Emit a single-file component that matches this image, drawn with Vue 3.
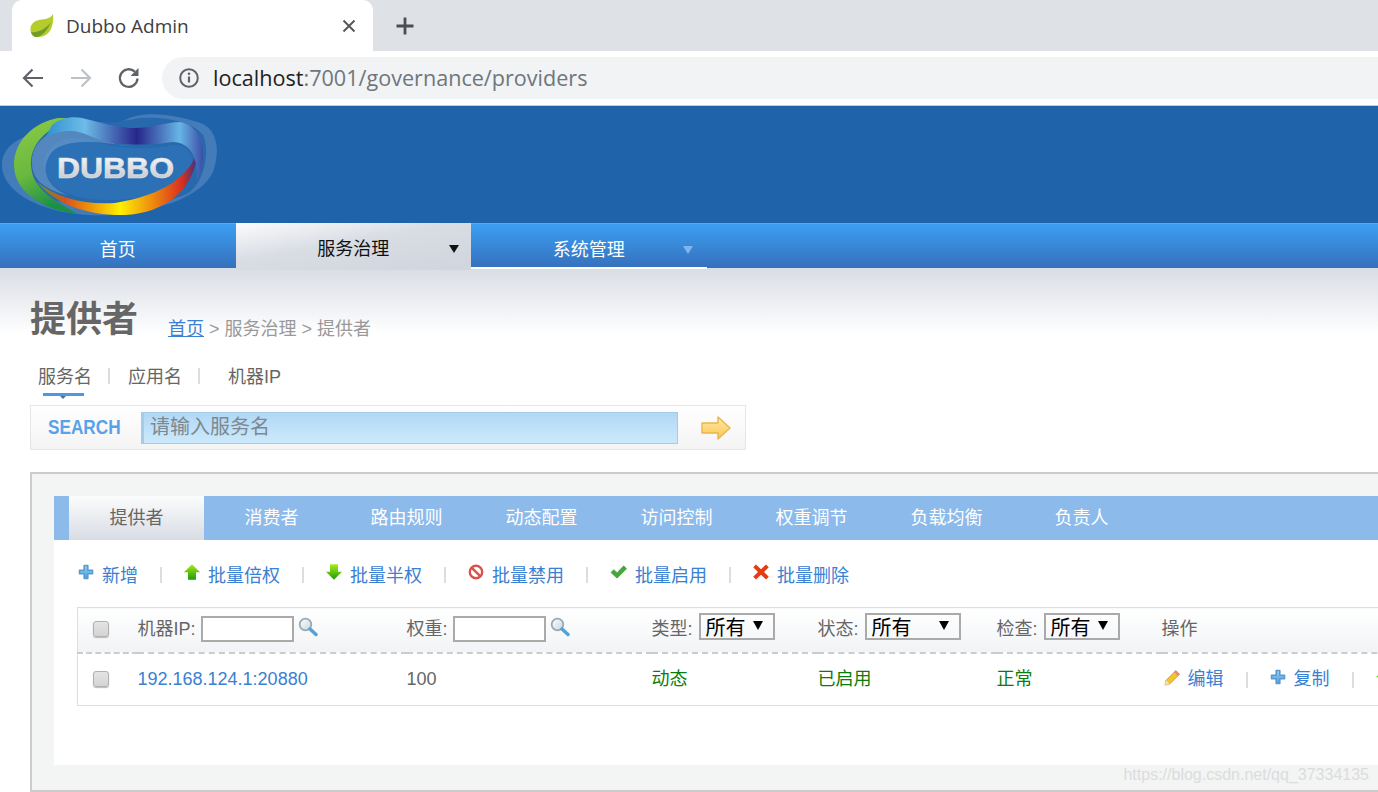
<template>
  <div class="screen">
    <!-- shared icons -->
    <svg class="icon-defs" width="0" height="0">
      <defs>
        <linearGradient id="grad-plus" x1="0" y1="0" x2="0" y2="1">
          <stop offset="0" stop-color="#8fd0f4" />
          <stop offset="1" stop-color="#4f9edc" />
        </linearGradient>
        <linearGradient id="grad-green" x1="0" y1="0" x2="0" y2="1">
          <stop offset="0" stop-color="#a8ec20" />
          <stop offset="1" stop-color="#1f9a06" />
        </linearGradient>
        <linearGradient id="grad-lens" x1="0" y1="0" x2="1" y2="1">
          <stop offset="0" stop-color="#ffffff" />
          <stop offset="1" stop-color="#c5d6e0" />
        </linearGradient>
      </defs>
      <symbol id="i-plus" viewBox="0 0 16 16">
        <path d="M6.200 1.500h3.600v4.700h4.700v3.600H9.800v4.700H6.200V9.800H1.500V6.200h4.700z" fill="url(#grad-plus)" stroke="#5a9ad0" stroke-width="1.600" stroke-linejoin="round" />
      </symbol>
      <symbol id="i-up" viewBox="0 0 16 16">
        <path d="M8 .3L16 8.300h-4v7.400H4V8.300H0z" fill="url(#grad-green)" />
      </symbol>
      <symbol id="i-down" viewBox="0 0 16 16">
        <path d="M4 .3h8v7.400h4L8 15.700 0 7.700h4z" fill="url(#grad-green)" />
      </symbol>
      <symbol id="i-ban" viewBox="0 0 16 16">
        <circle cx="8" cy="8" r="6.200" fill="#fff" stroke="#d9534a" stroke-width="2.400" />
        <path d="M3.800 3.800l8.400 8.400" stroke="#d9534a" stroke-width="2.400" />
      </symbol>
      <symbol id="i-check" viewBox="0 0 18 16">
        <path d="M1 8.500l3-3 3.500 3.200L14.500 1.500 17.500 4.500 7.500 14.500z" fill="#46a83a" stroke="#3a9030" stroke-width=".6" stroke-linejoin="round" />
      </symbol>
      <symbol id="i-del" viewBox="0 0 16 16">
        <path d="M3 .5L8 5.200 13 .5 15.800 3.300 11 8l4.800 4.800L13 15.500 8 10.800 3 15.500.2 12.800 5 8 .2 3.300z" fill="#e63c12" />
      </symbol>
      <symbol id="i-pencil" viewBox="0 0 18 18">
        <path d="M1 17l1.200-5L12.500 1.600l4 4L6 16z" fill="#f4c430" stroke="#b98a20" stroke-width=".7" />
        <path d="M12.500 1.600l4 4-1.800 1.800-4-4z" fill="#e08a80" />
        <path d="M1 17l1.200-5 3.800 4z" fill="#f3e2c0" />
      </symbol>
      <symbol id="i-search" viewBox="0 0 20 20">
        <circle cx="7.500" cy="7.500" r="5.800" fill="url(#grad-lens)" stroke="#9aa9b2" stroke-width="1.800" />
        <path d="M12 12l6 5.500" stroke="#4fa3d8" stroke-width="3.400" stroke-linecap="round" />
      </symbol>
    </svg>

    <!-- browser chrome -->
    <div class="tab-strip">
      <div class="browser-tab">
        <svg class="favicon" viewBox="0 0 26 26">
          <path d="M24 1C25 12 22 23 10 24 5 24.500 1 22 1.500 15.500 2 9 8 7 13 6.500 18 6 22 5 24 1z" fill="#b4cc2c" />
          <path d="M2 19C8 20 16 17 22 9 19 17 13 23 8 24 5 24.500 3 22 2 19z" fill="#6f9d28" />
        </svg>
        <span class="tab-title">Dubbo Admin</span>
        <svg class="tab-close" viewBox="0 0 14 14">
          <path d="M1.500 1.500l11 11M12.500 1.500l-11 11" stroke="#555" stroke-width="1.900" />
        </svg>
      </div>
      <svg class="new-tab" viewBox="0 0 20 20">
        <path d="M10 1.500v17M1.500 10h17" stroke="#4a4d52" stroke-width="2.800" />
      </svg>
    </div>
    <div class="browser-bar">
      <svg class="nav-btn" viewBox="0 0 24 24">
        <path d="M22 12H3M11.500 3.500L3 12l8.500 8.500" fill="none" stroke="#5f6368" stroke-width="2.200" />
      </svg>
      <svg class="nav-btn" viewBox="0 0 24 24">
        <path d="M2 12h19M12.500 3.500L21 12l-8.500 8.500" fill="none" stroke="#bdc1c6" stroke-width="2.200" />
      </svg>
      <svg class="nav-btn" viewBox="0 0 24 24">
        <path d="M20.500 12.500A8.800 8.800 0 1 1 17.800 5.700" fill="none" stroke="#5f6368" stroke-width="2.300" />
        <path d="M21.500 2v8h-8z" fill="#5f6368" />
      </svg>
      <div class="omnibox">
        <svg class="info-icon" viewBox="0 0 20 20">
          <circle cx="10" cy="10" r="8.800" fill="none" stroke="#5f6368" stroke-width="2" />
          <path d="M10 8.500v6" stroke="#5f6368" stroke-width="2.200" />
          <circle cx="10" cy="5.800" r="1.300" fill="#5f6368" />
        </svg>
        <span class="url"><b>localhost</b>:7001/governance/providers</span>
      </div>
    </div>

    <!-- site header -->
    <header class="site-header">
      <svg class="logo" viewBox="0 106 240 117">
        <defs>
          <linearGradient id="logo-green" x1="0" y1="0" x2="0.3" y2="1">
            <stop offset="0" stop-color="#8ecb48" />
            <stop offset="0.6" stop-color="#69b83f" />
            <stop offset="1" stop-color="#1d9048" />
          </linearGradient>
          <linearGradient id="logo-bottom" x1="0" y1="0" x2="1" y2="0">
            <stop offset="0" stop-color="#5a9a30" />
            <stop offset="0.18" stop-color="#d9531c" />
            <stop offset="0.35" stop-color="#f09a08" />
            <stop offset="0.52" stop-color="#fdf000" />
            <stop offset="0.72" stop-color="#ee8a10" />
            <stop offset="0.9" stop-color="#d9301c" />
            <stop offset="1" stop-color="#33308e" />
          </linearGradient>
          <linearGradient id="logo-top" x1="0" y1="0" x2="1" y2="0">
            <stop offset="0" stop-color="#2f8fcf" />
            <stop offset="0.25" stop-color="#6dbce8" />
            <stop offset="0.58" stop-color="#27268a" />
            <stop offset="0.85" stop-color="#67b5e6" />
            <stop offset="1" stop-color="#3c4ea6" />
          </linearGradient>
          <linearGradient id="logo-text" x1="0" y1="0" x2="0" y2="1">
            <stop offset="0" stop-color="#ffffff" />
            <stop offset="1" stop-color="#bcc0c6" />
          </linearGradient>
        </defs>
        <!-- pale outer swirl -->
        <path d="M2 165C2 146 20 136 42 132 65 112 105 128 125 120 150 108 185 118 203 124 218 132 220 152 213 172 200 200 150 212 110 215 50 218 2 195 2 165z" fill="#fff" fill-opacity=".16" />
        <path d="M14 165C14 146 35 132 60 126 90 124 120 122 140 118 170 116 195 124 203 135 210 150 205 180 190 192 160 210 60 212 30 190 20 182 14 175 14 165z" fill="#1f63ab" fill-opacity=".75" />
        <!-- pale inner swirl -->
        <path d="M44 165C44 145 65 132 90 140 120 150 150 150 172 145 186 144 194 152 192 168 180 190 150 198 115 200 80 201 45 192 44 165z" fill="#2c70b6" />
        <path d="M32 165C30 142 50 128 75 128 90 132 110 146 130 146 120 146 70 134 52 152 38 170 48 188 70 196 45 190 33 180 32 165z" fill="#fff" fill-opacity=".2" />
        <path d="M36 181C55 205 90 216 125 215 165 213 195 190 198 150 190 175 165 195 115 203 85 205 55 198 36 181z" fill="url(#logo-bottom)" />
        <path d="M58 118C35 122 14 140 14 165 14 190 40 210 78 214 55 200 32 190 31 165 30 145 45 128 75 118z" fill="url(#logo-green)" />
        <path d="M52 125C60 118 72 116 82 118 95 121 110 126 130 128 150 129 165 122 180 122 195 124 205 140 203 160 202 170 200 175 197 180 198 160 192 142 172 142 150 146 110 146 90 136 78 130 62 128 45 138z" fill="url(#logo-top)" />
        <text x="57" y="178" class="logo-text" textLength="117" lengthAdjust="spacingAndGlyphs">DUBBO</text>
      </svg>
    </header>

    <nav class="main-nav">
      <a
        v-for="item in navItems"
        :key="item.label"
        class="nav-item"
        :class="{ active: item.active, 'has-menu': item.menu }"
      >
        {{ item.label }}
        <i v-if="item.menu" class="nav-caret"></i>
      </a>
    </nav>

    <main class="page">
      <div class="title-row">
        <h1>提供者</h1>
        <p class="crumbs"><a>首页</a> &gt; 服务治理 &gt; 提供者</p>
      </div>

      <ul class="search-tabs">
        <li class="current">服务名</li>
        <li class="sep"></li>
        <li>应用名</li>
        <li class="sep"></li>
        <li class="last">机器IP</li>
      </ul>

      <div class="search-box">
        <span class="search-label">SEARCH</span>
        <input class="search-input" placeholder="请输入服务名" />
        <svg class="search-go" viewBox="0 0 30 24">
          <defs>
            <linearGradient id="grad-arrow" x1="0" y1="0" x2="0" y2="1">
              <stop offset="0" stop-color="#ffe9a8" />
              <stop offset="1" stop-color="#f9c84e" />
            </linearGradient>
          </defs>
          <path d="M1 7h16V1l12 11-12 11v-6H1z" fill="url(#grad-arrow)" stroke="#eab64a" stroke-width="1.400" stroke-linejoin="round" />
        </svg>
      </div>

      <section class="panel">
        <div class="panel-body">
          <ul class="panel-tabs">
            <li v-for="(tab, i) in tabs" :key="tab" :class="{ active: i === 0 }">{{ tab }}</li>
          </ul>

          <div class="actions">
            <template v-for="(act, i) in actions" :key="act.label">
              <span v-if="i > 0" class="action-sep"></span>
              <a class="action">
                <svg class="action-icon" :style="{ width: act.w + 'px' }"><use :href="'#' + act.icon" /></svg>
                {{ act.label }}
              </a>
            </template>
          </div>

          <table class="grid">
            <colgroup>
              <col style="width: 60px" />
              <col style="width: 269px" />
              <col style="width: 245px" />
              <col style="width: 166px" />
              <col style="width: 179px" />
              <col style="width: 165px" />
              <col />
            </colgroup>
            <thead>
              <tr>
                <th class="check-cell"><div class="head-cell"><input type="checkbox" class="check head-check" /></div></th>
                <th>
                  <div class="head-cell">
                    <span class="head-label">机器IP:</span>
                    <input class="filter" />
                    <svg class="lens"><use href="#i-search" /></svg>
                  </div>
                </th>
                <th>
                  <div class="head-cell">
                    <span class="head-label">权重:</span>
                    <input class="filter" />
                    <svg class="lens"><use href="#i-search" /></svg>
                  </div>
                </th>
                <th v-for="sel in selects" :key="sel.label">
                  <div class="head-cell">
                    <span class="head-label">{{ sel.label }}:</span>
                    <span class="select" :style="{ width: sel.w + 'px' }">所有<i></i></span>
                  </div>
                </th>
                <th><div class="head-cell"><span class="head-label">操作</span></div></th>
              </tr>
            </thead>
            <tbody>
              <tr>
                <td class="check-cell"><input type="checkbox" class="check" /></td>
                <td><a class="ip">192.168.124.1:20880</a></td>
                <td>100</td>
                <td class="ok">动态</td>
                <td class="ok">已启用</td>
                <td class="ok">正常</td>
                <td>
                  <div class="row-ops">
                    <a class="action">
                      <svg class="action-icon pencil"><use href="#i-pencil" /></svg>
                      编辑
                    </a>
                    <span class="action-sep"></span>
                    <a class="action">
                      <svg class="action-icon"><use href="#i-plus" /></svg>
                      复制
                    </a>
                    <span class="action-sep"></span>
                    <svg class="action-icon"><use href="#i-up" /></svg>
                  </div>
                </td>
              </tr>
            </tbody>
          </table>
        </div>
        <span class="watermark">https://blog.csdn.net/qq_37334135</span>
      </section>
    </main>
  </div>
</template>

<script setup>
const navItems = [
  { label: '首页' },
  { label: '服务治理', active: true, menu: true },
  { label: '系统管理', menu: true },
];

const tabs = ['提供者', '消费者', '路由规则', '动态配置', '访问控制', '权重调节', '负载均衡', '负责人'];

const actions = [
  { label: '新增', icon: 'i-plus', w: 16 },
  { label: '批量倍权', icon: 'i-up', w: 16 },
  { label: '批量半权', icon: 'i-down', w: 16 },
  { label: '批量禁用', icon: 'i-ban', w: 16 },
  { label: '批量启用', icon: 'i-check', w: 17 },
  { label: '批量删除', icon: 'i-del', w: 16 },
];

const selects = [
  { label: '类型', w: 76 },
  { label: '状态', w: 96 },
  { label: '检查', w: 76 },
];
</script>

<style>
html,
body {
  margin: 0;
  overflow: hidden;
  background: #fff;
}
</style>

<style scoped>
.screen {
  width: 1378px;
  height: 792px;
  overflow: hidden;
  font-family: "Liberation Sans", "Noto Sans CJK SC", sans-serif;
  font-size: 18px;
  color: #666;
}

.icon-defs {
  display: block;
  height: 0;
}

/* Browser chrome */
.tab-strip {
  height: 51px;
  background: #dee1e6;
  display: flex;
  align-items: center;
  padding-left: 12px;
}

.browser-tab {
  width: 361px;
  height: 51px;
  box-sizing: border-box;
  background: #fff;
  border-radius: 10px 10px 0 0;
  display: flex;
  align-items: center;
  padding: 0 17px;
}

.favicon {
  width: 26px;
  height: 26px;
  margin-right: 11px;
}

.tab-title {
  flex: 1;
  font-family: "Open Sans", sans-serif;
  font-size: 19px;
  color: #3c4043;
}

.tab-close {
  width: 14px;
  height: 14px;
}

.new-tab {
  width: 20px;
  height: 20px;
  margin-left: 22px;
}

.browser-bar {
  height: 55px;
  box-sizing: border-box;
  border-bottom: 1px solid #c8ccd0;
  display: flex;
  align-items: center;
  padding-left: 21px;
  gap: 24px;
  background: #fff;
}

.nav-btn {
  width: 24px;
  height: 24px;
}

.omnibox {
  flex: 1;
  height: 42px;
  margin-left: -3px;
  background: #f1f3f4;
  border-radius: 21px 0 0 21px;
  display: flex;
  align-items: center;
  padding-left: 17px;
  gap: 14px;
}

.info-icon {
  width: 20px;
  height: 20px;
}

.url {
  margin-top: -1px;
  font-family: "Open Sans", sans-serif;
  font-size: 21.600px;
  color: #6f767d;
}

.url b {
  font-weight: 400;
  color: #202124;
}

/* Site header */
.site-header {
  height: 117px;
  background: #1f63ab;
}

.logo {
  display: block;
  width: 240px;
  height: 117px;
}

.logo-text {
  font-family: "Liberation Sans", sans-serif;
  font-weight: 700;
  font-size: 29px;
  fill: url(#logo-text);
  stroke: #dfe2e6;
  stroke-width: 0.6px;
}

.main-nav {
  height: 45px;
  display: flex;
  background: linear-gradient(#3c9ff2, #3570bc);
  border-top: 1px solid #5aa9ee;
  box-sizing: border-box;
  box-shadow: 0 1px 0 #a9ccf0;
}

.nav-item {
  position: relative;
  width: 235.500px;
  line-height: 52px;
  text-align: center;
  color: #fff;
  font-size: 18px;
}

.nav-item.has-menu:not(.active) {
  height: 45px;
  border-bottom: 2px solid #fff;
  box-sizing: border-box;
}

.nav-item.active {
  height: 47px;
  margin-top: -1px;
  background: linear-gradient(170deg, #fbfbfc 0%, #d8dce3 45%, #d0d5de 100%);
  color: #111;
}

.nav-caret {
  position: absolute;
  right: 14px;
  top: 22px;
  width: 0;
  height: 0;
  border: 5px solid transparent;
  border-top: 8px solid #7fb6ee;
  border-bottom: 0;
}

.active .nav-caret {
  right: 12.500px;
  border-top-color: #111;
}

/* Page */
.page {
  padding: 27px 0 0 30px;
  background: linear-gradient(#d9dde4 0, #fff 66px) no-repeat;
}

.title-row {
  display: flex;
  align-items: flex-start;
}

h1 {
  margin: 0;
  font-size: 36px;
  line-height: 50px;
  font-weight: 700;
  color: #666;
}

.crumbs {
  margin: 21px 0 0 30px;
  font-size: 18px;
  line-height: 26px;
  color: #999;
}

.crumbs a {
  color: #3a80d2;
  text-decoration: underline;
}

.search-tabs {
  list-style: none;
  margin: 12px 0 0;
  padding: 0 0 0 8px;
  display: flex;
  align-items: center;
  height: 48px;
  color: #666;
}

.search-tabs li {
  position: relative;
  padding-bottom: 12px;
}

.search-tabs .sep {
  width: 2px;
  height: 16px;
  padding: 0;
  margin: 0 18px 10px 16px;
  background: #ddd;
}

.search-tabs .last {
  margin-left: 10px;
}

.search-tabs .current::after {
  content: "";
  position: absolute;
  left: 5px;
  right: 8px;
  bottom: 4px;
  height: 3px;
  background: #4d98e6;
}

.search-tabs .current::before {
  content: "";
  position: absolute;
  left: 22px;
  bottom: 1px;
  border: 3px solid transparent;
  border-top: 3px solid #4d6f98;
  border-bottom: 0;
}

.search-box {
  width: 716px;
  height: 45px;
  box-sizing: border-box;
  display: flex;
  align-items: center;
  border: 1px solid #e6e6e6;
  background: linear-gradient(#fff, #f4f4f4);
  padding-left: 17px;
}

.search-label {
  width: 93px;
  font-size: 20px;
  font-weight: 700;
  color: #5aa2e8;
  transform: scaleX(0.86);
  transform-origin: left;
}

.search-input {
  width: 537px;
  height: 32px;
  box-sizing: border-box;
  padding: 0 6px;
  border: 1px solid #a4cce8;
  border-left-width: 3px;
  background: linear-gradient(#b2d8f5, #cbe9fb);
  font-family: inherit;
  font-size: 20px;
  outline: none;
}

.search-input::placeholder {
  color: #7d8890;
}

.search-go {
  width: 30px;
  height: 24px;
  margin-left: 23px;
}

/* Panel */
.panel {
  position: relative;
  width: 1400px;
  height: 320px;
  margin-top: 22px;
  box-sizing: border-box;
  border: 2px solid #ccc;
  background: #f3f4f4;
  padding: 22px 0 0 22px;
}

.panel-body {
  height: 269px;
  background: #fff;
}

.panel-tabs {
  list-style: none;
  margin: 0;
  padding: 0 0 0 15px;
  height: 44px;
  display: flex;
  background: #8bbaeb;
}

.panel-tabs li {
  width: 135px;
  line-height: 44px;
  text-align: center;
  color: #fff;
}

.panel-tabs li.active {
  background: linear-gradient(#fbfcfc, #d8dce4);
  color: #666;
}

.actions {
  height: 67px;
  display: flex;
  align-items: center;
  padding-left: 24px;
  box-sizing: border-box;
}

.action {
  display: inline-flex;
  align-items: center;
  gap: 8px;
  color: #3a80d2;
}

.action-icon {
  width: 16px;
  height: 16px;
  margin-top: -3px;
}

.action-icon.pencil {
  width: 17px;
  height: 17px;
  margin-right: -1px;
}

.action-sep {
  display: inline-block;
  width: 2px;
  height: 16px;
  margin: 2px 22px 0 22px;
  background: #ddd;
}

.grid {
  width: 1400px;
  margin-left: 23px;
  table-layout: fixed;
  border-collapse: collapse;
  border-left: 1px solid #ddd;
  line-height: 24px;
}

.grid th {
  height: 44px;
  padding: 0;
  text-align: left;
  font-weight: 400;
  border-top: 1px solid #ddd;
  border-bottom: 2px dashed #ccc;
  background: linear-gradient(#fff, #f1f3f6);
  white-space: nowrap;
}

.head-cell {
  display: flex;
  align-items: center;
  height: 42px;
  margin-bottom: 2px;
}

.head-label {
  margin-right: 5px;
}

.grid td {
  height: 49px;
  padding: 0 0 2px;
  border-bottom: 1px solid #ddd;
  white-space: nowrap;
}

.check-cell {
  padding-left: 15px !important;
}

.check {
  appearance: none;
  display: block;
  width: 16px;
  height: 16px;
  margin: 0;
  border: 1px solid #b0b0b0;
  border-radius: 3px;
  background: linear-gradient(#e4e4e4, #d4d4d4);
  box-shadow: 0 1px 1px #bbb;
}

.head-check {
  margin-top: -1px;
}

.filter {
  width: 93px;
  height: 26px;
  box-sizing: border-box;
  border: 2px solid #aaa;
  background: #fff;
  outline: none;
}

.lens {
  width: 20px;
  height: 20px;
  margin: -5px 0 0 4px;
}

.select {
  position: relative;
  display: inline-block;
  height: 27px;
  line-height: 27px;
  box-sizing: border-box;
  border: 2px solid #aaa;
  padding-left: 5px;
  margin: -5px 0 0 1px;
  font-size: 20px;
  color: #000;
}

.select i {
  position: absolute;
  right: 10px;
  top: 6px;
  width: 0;
  height: 0;
  border: 5px solid transparent;
  border-top: 9px solid #000;
  border-bottom: 0;
}

.ip {
  color: #3a80d2;
}

.ok {
  color: #0a7d0a;
}

.row-ops {
  display: flex;
  align-items: center;
  padding-left: 2px;
}

.watermark {
  position: absolute;
  right: 59px;
  bottom: 6px;
  font-size: 16px;
  color: #dcdcdc;
}
</style>
